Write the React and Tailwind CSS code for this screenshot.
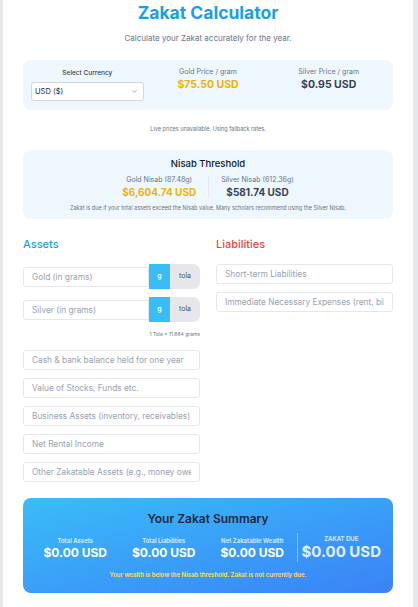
import { ChevronDown } from 'lucide-react';

const assetFields = [
  'Cash & bank balance held for one year',
  'Value of Stocks, Funds etc.',
  'Business Assets (inventory, receivables)',
  'Net Rental Income',
  'Other Zakatable Assets (e.g., money owed to you)',
];

const liabilityFields = [
  'Short-term Liabilities',
  'Immediate Necessary Expenses (rent, bills)',
];

const summary = [
  { label: 'Total Assets', value: '$0.00 USD' },
  { label: 'Total Liabilities', value: '$0.00 USD' },
  { label: 'Net Zakatable Wealth', value: '$0.00 USD' },
];

const TextInput = ({ placeholder, className = '' }) => (
  <input
    type="text"
    placeholder={placeholder}
    className={`h-[20px] w-full min-w-0 border border-gray-200 bg-white px-[8px] text-[8.3px] text-gray-700 outline-none placeholder:text-gray-400 ${className}`}
  />
);

const MetalRow = ({ placeholder }) => (
  <div className="flex items-center">
    <TextInput placeholder={placeholder} className="rounded-l-[3px] rounded-r-none" />
    <div className="flex h-[25px] shrink-0 items-center">
      <button className="flex h-full w-[21px] items-center justify-center bg-[#38bdf8] text-[7px] font-semibold text-white">
        g
      </button>
      <button className="flex h-full w-[30px] items-center justify-center rounded-r-[7px] bg-gray-200 text-[7px] text-gray-600">
        tola
      </button>
    </div>
  </div>
);

export default function App() {
  return (
    <div
      className="min-h-screen bg-gray-200 pl-[3px] pr-[5px]"
      style={{ fontFamily: 'Inter, "Noto Sans", sans-serif' }}
    >
      <div className="min-h-screen bg-white px-[20px] pb-6">
        <h1 className="text-center text-[17.5px] leading-[26px] font-bold text-[#1a9fe6]">Zakat Calculator</h1>
        <p className="mt-[6px] text-center text-[8px] leading-[12px] text-gray-500">
          Calculate your Zakat accurately for the year.
        </p>

        {/* prices */}
        <div className="mt-[16px] grid h-[50px] grid-cols-3 gap-2 rounded-[8px] bg-[#eff7fe] px-[8px]">
          <div className="pt-[8px] text-center">
            <p className="text-[6.5px] leading-[10px] font-medium text-gray-700">Select Currency</p>
            <div className="mt-[4px] flex h-[19px] items-center justify-between rounded-[3px] border border-gray-300 bg-white px-[3px] text-left">
              <span className="text-[7.5px] text-gray-800">USD ($)</span>
              <ChevronDown size={7} className="mr-[2px] text-gray-500" />
            </div>
          </div>
          <div className="pt-[7px] text-center">
            <p className="text-[7px] leading-[10px] text-gray-500">Gold Price / gram</p>
            <p className="mt-[1px] text-[10.5px] leading-[14px] font-bold text-[#eab308]">$75.50 USD</p>
          </div>
          <div className="pt-[7px] text-center">
            <p className="text-[7px] leading-[10px] text-gray-500">Silver Price / gram</p>
            <p className="mt-[1px] text-[10.5px] leading-[14px] font-bold text-gray-700">$0.95 USD</p>
          </div>
        </div>

        <p className="mt-[15px] text-center text-[5.5px] leading-[8px] text-gray-500">
          Live prices unavailable. Using fallback rates.
        </p>

        {/* nisab */}
        <div className="mt-[17px] rounded-[8px] bg-[#eff7fe] px-3 pt-[7px] pb-[7px] text-center">
          <h2 className="text-[9.5px] leading-[14px] font-medium text-gray-900">Nisab Threshold</h2>
          <div className="mt-[4px] flex items-center justify-center gap-[12px]">
            <div>
              <p className="text-[7px] leading-[9px] text-gray-500">Gold Nisab (87.48g)</p>
              <p className="mt-[1px] text-[10px] leading-[14px] font-bold text-[#eab308]">$6,604.74 USD</p>
            </div>
            <div className="h-[21px] w-px bg-gray-200" />
            <div>
              <p className="text-[7px] leading-[9px] text-gray-500">Silver Nisab (612.36g)</p>
              <p className="mt-[1px] text-[10px] leading-[14px] font-bold text-gray-700">$581.74 USD</p>
            </div>
          </div>
          <p className="mt-[5px] text-[5.5px] leading-[8px] text-gray-500">
            Zakat is due if your total assets exceed the Nisab value. Many scholars recommend using the Silver Nisab.
          </p>
        </div>

        {/* inputs */}
        <div className="mt-[17px] grid grid-cols-2 items-start gap-[16px]">
          <div>
            <h3 className="text-[11px] leading-[16px] font-medium text-[#1a9fe6]">Assets</h3>
            <div className="mt-[12px] flex flex-col gap-[8px]">
              <MetalRow placeholder="Gold (in grams)" />
              <MetalRow placeholder="Silver (in grams)" />
            </div>
            <p className="mt-[8px] text-right text-[5px] leading-[8px] text-gray-500">1 Tola = 11.664 grams</p>
            <div className="mt-[12px] flex flex-col gap-[8px]">
              {assetFields.map((f) => (
                <TextInput key={f} placeholder={f} className="rounded-[3px]" />
              ))}
            </div>
          </div>
          <div>
            <h3 className="text-[11px] leading-[16px] font-medium text-[#ef4444]">Liabilities</h3>
            <div className="mt-[12px] flex flex-col gap-[8px]">
              {liabilityFields.map((f) => (
                <TextInput key={f} placeholder={f} className="rounded-[3px]" />
              ))}
            </div>
          </div>
        </div>

        {/* summary */}
        <div className="mt-[16px] rounded-[8px] bg-gradient-to-br from-[#3abcf8] to-[#3b82f6] px-[8px] pt-[13px] pb-[14px] text-center">
          <h2 className="text-[12px] leading-[16px] font-semibold text-slate-800">Your Zakat Summary</h2>
          <div className="mt-[6px] grid grid-cols-4 items-center">
            {summary.map((s) => (
              <div key={s.label}>
                <p className="text-[6px] leading-[9px] font-semibold text-white/80">{s.label}</p>
                <p className="mt-[1px] text-[12px] leading-[14px] font-bold text-white">{s.value}</p>
              </div>
            ))}
            <div className="border-l border-white/40 py-[1px]">
              <p className="text-[6px] leading-[9px] font-semibold text-white/80">ZAKAT DUE</p>
              <p className="text-[15px] leading-[18px] font-bold text-white/85">$0.00 USD</p>
            </div>
          </div>
          <p className="mt-[9px] text-[6px] leading-[8px] font-semibold text-[#fde047]">
            Your wealth is below the Nisab threshold. Zakat is not currently due.
          </p>
        </div>
      </div>
    </div>
  );
}
